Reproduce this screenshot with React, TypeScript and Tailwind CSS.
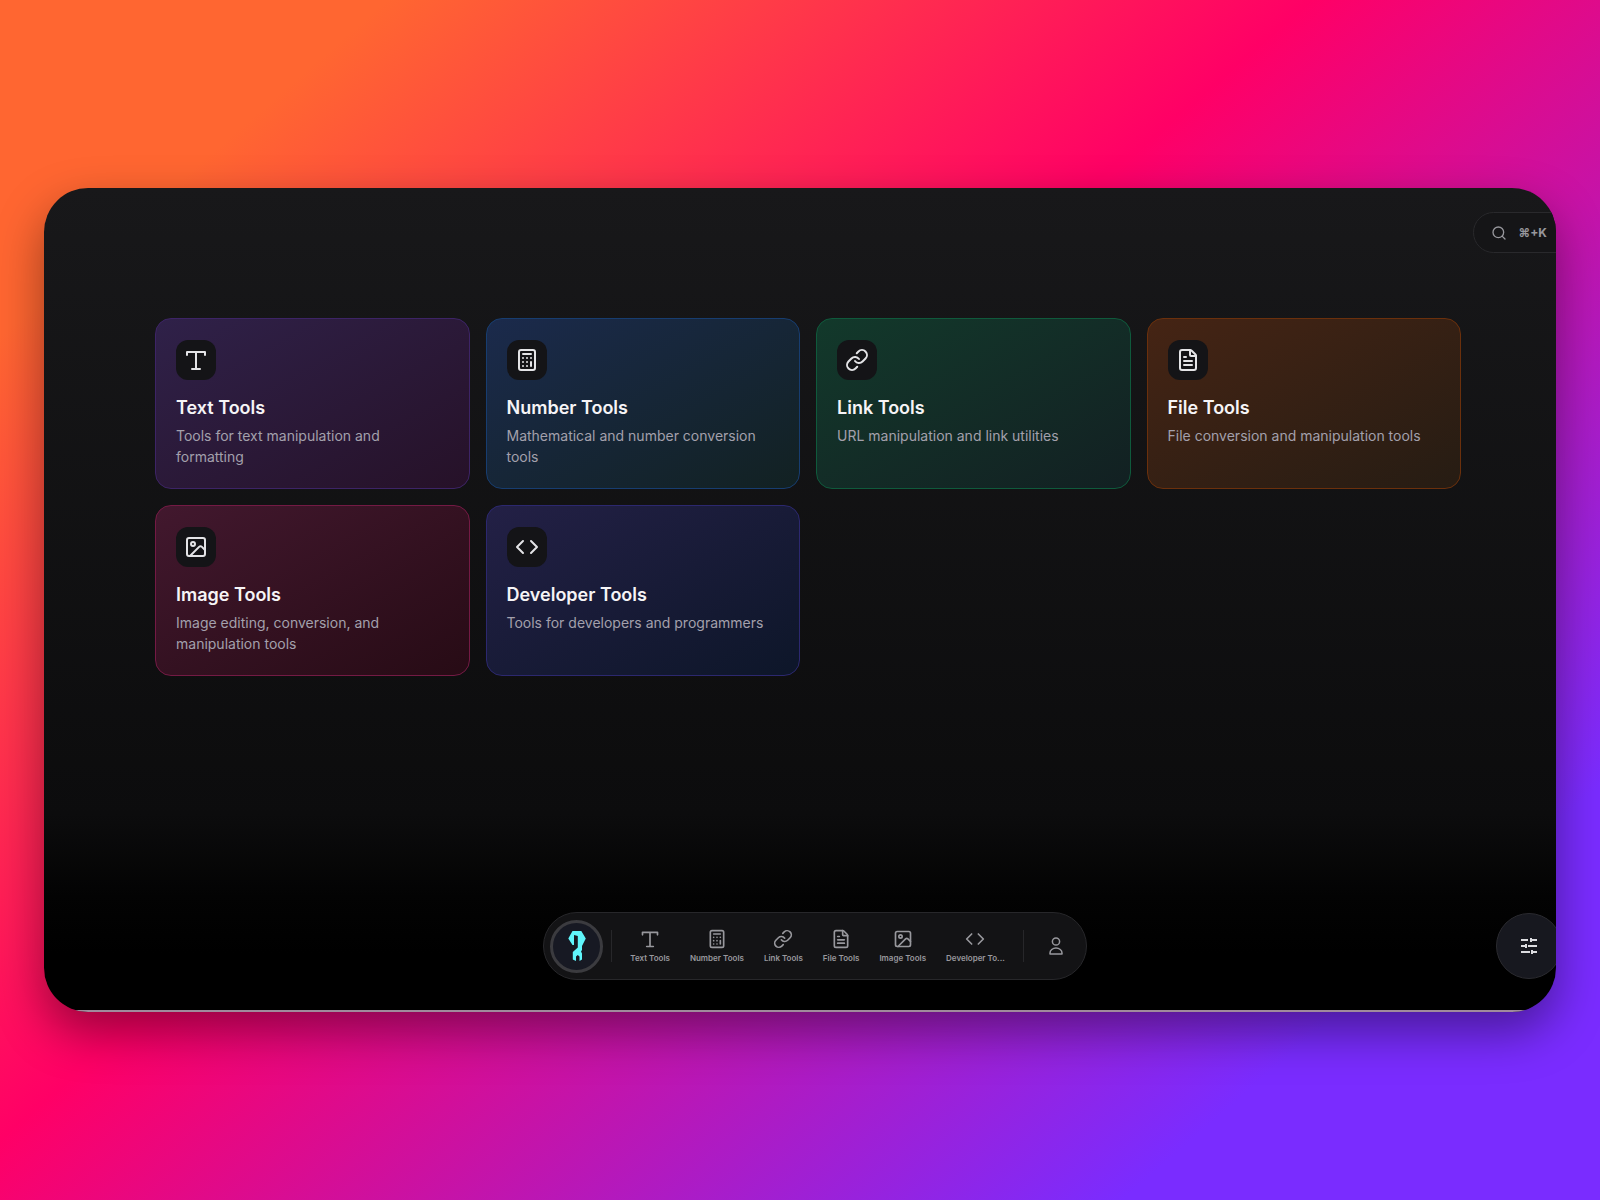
import { Calculator, Code, FileText, Image, Link, Search } from 'lucide-react';

const tools = [
  {
    name: "Text Tools",
    short: "Text Tools",
    desc: "Tools for text manipulation and formatting",
    icon: SerifT,
    card: "border-[#3d2466] from-[#2f2149] to-[#261128]",
  },
  {
    name: "Number Tools",
    short: "Number Tools",
    desc: "Mathematical and number conversion tools",
    icon: Calculator,
    card: "border-[#173d70] from-[#1b2a4c] to-[#122122]",
  },
  {
    name: "Link Tools",
    short: "Link Tools",
    desc: "URL manipulation and link utilities",
    icon: Link,
    card: "border-[#0f5a3c] from-[#12392b] to-[#122022]",
  },
  {
    name: "File Tools",
    short: "File Tools",
    desc: "File conversion and manipulation tools",
    icon: FileText,
    card: "border-[#6b300c] from-[#452414] to-[#261c13]",
  },
  {
    name: "Image Tools",
    short: "Image Tools",
    desc: "Image editing, conversion, and manipulation tools",
    icon: Image,
    card: "border-[#741a44] from-[#42182e] to-[#270b15]",
  },
  {
    name: "Developer Tools",
    short: "Developer To...",
    desc: "Tools for developers and programmers",
    icon: Code,
    card: "border-[#2c286f] from-[#232046] to-[#0d1629]",
  },
];

function SerifT({ className }: { className?: string }) {
  return (
    <svg viewBox="0 0 24 24" className={className} fill="none" stroke="currentColor" strokeWidth={2} strokeLinecap="round" strokeLinejoin="round">
      <path d="M3 7V4h18v3M12 4v17M8 21h8" />
    </svg>
  );
}

function Logo() {
  return (
    <svg viewBox="0 0 18 30" className="h-[30px] w-[18px]" fill="#5ff5fb">
      <path d="M4.500 0h8.800L17.800 7.500 14 15v4l-1 1.500 1 2v6L11.500 30v-4.500L9.800 24 8 25.500V30l-3.200-1.500V21l5-4.500V5L6 4v10H4.500L.3 7.500z" />
    </svg>
  );
}

function UserIcon() {
  return (
    <svg viewBox="0 0 20 20" className="size-5" fill="none" stroke="currentColor" strokeWidth={1.5}>
      <circle cx="10" cy="5.500" r="3.600" />
      <path d="M4 18v-1a6 5 0 0 1 12 0v1z" strokeLinejoin="round" />
    </svg>
  );
}

function Sliders() {
  return (
    <svg viewBox="0 0 18 18" className="size-[18px]" fill="none" stroke="currentColor" strokeWidth={2}>
      <path d="M1 3h7M10 3h7M11 1v4M1 9h5M6 7v4M8 9h9M1 15h9M12 15h5M12 13v4" />
    </svg>
  );
}

export default function App() {
  return (
    <div className="min-h-screen flex items-center px-11 font-['Inter',sans-serif] bg-[linear-gradient(139deg,#ff6631_13%,#ff0066_44%,#7a2cff_84%)]">
      <div className="w-full min-h-[824px] flex flex-col overflow-hidden rounded-[44px] bg-[linear-gradient(180deg,#18181a_0%,#0c0c0d_76%,#030303_86%,#000_93%)] shadow-[0_20px_48px_rgba(0,0,0,0.4)]">
        <header className="flex justify-end pt-6 -mr-6">
          <button className="h-[41px] flex items-center gap-3 rounded-full border border-[#29292c] bg-[#151517] pl-[17px] pr-8 text-[#97979c]">
            <Search size={16} />
            <kbd className="font-['Inter',sans-serif] text-xs font-bold">⌘+K</kbd>
          </button>
        </header>

        {/* Tool cards */}
        <main className="grid grid-cols-4 gap-4 pl-[111px] pr-[95px] pt-[65px]">
          {tools.map(({ name, desc, icon: Icon, card }) => (
            <a key={name} href="#" className={`block h-[171px] rounded-2xl border bg-linear-to-br px-5 py-[21px] ${card}`}>
              <div className="size-10 flex items-center justify-center rounded-xl bg-[#141417] text-[#e4e4e7]">
                <Icon className="size-6" />
              </div>
              <h2 className="mt-3.5 text-lg leading-7 font-semibold text-[#f6f4f6]">{name}</h2>
              <p className="mt-[3px] text-sm leading-[21px] text-[#a3a0ac]">{desc}</p>
            </a>
          ))}
        </main>

        {/* Bottom dock */}
        <footer className="mt-auto grid grid-cols-[1fr_auto_1fr] items-center pl-[30px] pb-[30px]">
          <nav className="col-start-2 h-[68px] flex items-center rounded-full border border-[#27272a] bg-[#131315] px-1.5 text-[#98989d]">
            <button aria-label="Home" className="size-[53px] flex items-center justify-center rounded-full border-3 border-[#3b3b3f] bg-[#171923]">
              <Logo />
            </button>
            <span className="mx-2 h-8 w-px bg-[#27272a]" />
            <div className="flex">
              {tools.map(({ name, short, icon: Icon }) => (
                <a key={name} href="#" title={name} className="flex flex-col items-center gap-1 px-2.5">
                  <Icon className="size-5" />
                  <span className="whitespace-nowrap text-[8px] leading-[10px] font-semibold">{short}</span>
                </a>
              ))}
            </div>
            <span className="mx-2 h-8 w-px bg-[#27272a]" />
            <button aria-label="Account" className="size-12 flex items-center justify-center">
              <UserIcon />
            </button>
          </nav>
          <button aria-label="Settings" className="size-[66px] flex items-center justify-center justify-self-end -mr-1.5 rounded-full border border-[#2b2b30] bg-[#17181f] text-[#dcdce0]">
            <Sliders />
          </button>
        </footer>
        <div className="h-0.5 bg-[#a08a9c]" />
      </div>
    </div>
  );
}
